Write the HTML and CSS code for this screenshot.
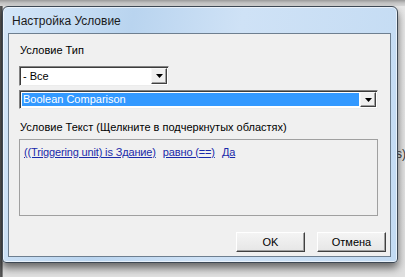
FILE: index.html
```html
<!DOCTYPE html>
<html>
<head>
<meta charset="utf-8">
<link rel="stylesheet" href="styles.css">
</head>
<body>
<div class="desk">
  <div class="bgtext">s)</div>
  <div class="window">
    <div class="title">Настройка Условие</div>
    <div class="client">
      <div class="label first">Условие Тип</div>
      <div class="combo c1">
        <span class="val">- Все</span>
        <span class="dd"><svg width="7" height="4" viewBox="0 0 7 4"><polygon points="0,0 7,0 3.5,4" fill="#000"/></svg></span>
      </div>
      <div class="combo c2">
        <span class="val sel">Boolean Comparison</span>
        <span class="dd"><svg width="7" height="4" viewBox="0 0 7 4"><polygon points="0,0 7,0 3.5,4" fill="#000"/></svg></span>
      </div>
      <div class="label second">Условие Текст (Щелкните в подчеркнутых областях)</div>
      <div class="textbox">
        <a class="lnk">((Triggering unit) is Здание)</a>
        <a class="lnk">равно (==)</a>
        <a class="lnk">Да</a>
      </div>
      <div class="buttons">
        <button class="btn">OK</button>
        <button class="btn">Отмена</button>
      </div>
    </div>
  </div>
</div>
</body>
</html>
```
FILE: styles.css
```css
html, body {
  margin: 0;
  padding: 0;
}
body {
  width: 405px;
  height: 277px;
  overflow: hidden;
  background: #e4e4e4;
  font-family: "Liberation Sans", Arial, sans-serif;
  font-size: 11px;
  color: #000;
}
.desk {
  position: relative;
  width: 405px;
  height: 277px;
  padding-top: 6px;
  padding-left: 2px;
  box-sizing: border-box;
  background:
    linear-gradient(to bottom, #9a9a9a 0, #c4c4c4 3px, #d8d8d8 6px, transparent 6px),
    linear-gradient(to right, #3c3c3c 0, #777 1px, #2a2a2a 2px, transparent 3px),
    linear-gradient(to bottom, #e8e8e8, #e0e0e0);
}
.bgtext {
  position: absolute;
  left: 396px;
  top: 147px;
  font-size: 12px;
  color: #333;
}
.window {
  position: relative;
  width: 396px;
  height: 257px;
  box-sizing: border-box;
  border: 1px solid #3d4854;
  border-radius: 6px 6px 4px 4px;
  background: linear-gradient(100deg, #d4e6f8 0%, #b9d4ef 30%, #cfe2f6 55%, #c3dbf3 100%);
  box-shadow: 0 5px 9px rgba(0, 0, 0, 0.55), inset 0 0 0 1px rgba(255, 255, 255, 0.6);
  display: flex;
  flex-direction: column;
  padding: 0 6px 5px 5px;
}
.title {
  height: 26px;
  line-height: 28px;
  padding-left: 4px;
  font-size: 12px;
  color: #1a1a1a;
  flex: none;
}
.client {
  flex: 1;
  background: #f0f0f0;
  border: 1px solid #6e7f90;
  padding: 0 0 0 10px;
  display: flex;
  flex-direction: column;
  align-items: flex-start;
}
.label {
  line-height: 13px;
  padding-left: 1px;
}
.label.first {
  margin-top: 10px;
}
.label.second {
  margin-top: 12px;
}
.combo {
  box-sizing: border-box;
  display: flex;
  align-items: center;
  background: #fff;
  border-style: solid;
  border-width: 1px;
  border-color: #828282 #ececec #ececec #828282;
  box-shadow: inset 1px 1px 0 #3c3c3c;
  padding: 1px 1px 1px 2px;
}
.c1 {
  width: 150px;
  height: 20px;
  margin-top: 9px;
}
.c2 {
  width: 359px;
  height: 19px;
  margin-top: 4px;
}
.val {
  flex: 1;
  line-height: 14px;
  padding-left: 1px;
  white-space: nowrap;
}
.val.sel {
  background: #3399ff;
  color: #fff;
  margin: 1px 1px 1px 0;
  align-self: stretch;
  line-height: 13px;
}
.dd {
  box-sizing: border-box;
  width: 16px;
  align-self: stretch;
  background: #f0f0f0;
  border-style: solid;
  border-width: 1px;
  border-color: #f8f8f8 #404040 #404040 #f8f8f8;
  box-shadow: inset -1px -1px 0 #a0a0a0;
  display: flex;
  align-items: center;
  justify-content: center;
}
.dd svg {
  display: block;
}
.textbox {
  box-sizing: border-box;
  width: 359px;
  height: 77px;
  margin-top: 5px;
  border: 1px solid #a0a0a0;
  padding: 6px 0 0 4px;
  line-height: 13px;
  white-space: nowrap;
}
.lnk {
  color: #1a2aaa;
  text-decoration: underline;
  margin-right: 4px;
  letter-spacing: -0.15px;
}
.buttons {
  align-self: stretch;
  display: flex;
  justify-content: flex-end;
  gap: 12px;
  margin-top: 16px;
  padding-right: 4px;
}
.btn {
  box-sizing: border-box;
  width: 69px;
  height: 20px;
  padding: 0;
  font-family: "Liberation Sans", Arial, sans-serif;
  font-size: 11px;
  color: #000;
  background: linear-gradient(to bottom, #f4f4f4, #e6e6e6);
  border: 1px solid;
  border-color: #ffffff #404040 #404040 #ffffff;
  box-shadow: inset -1px -1px 0 #a0a0a0;
}
```
